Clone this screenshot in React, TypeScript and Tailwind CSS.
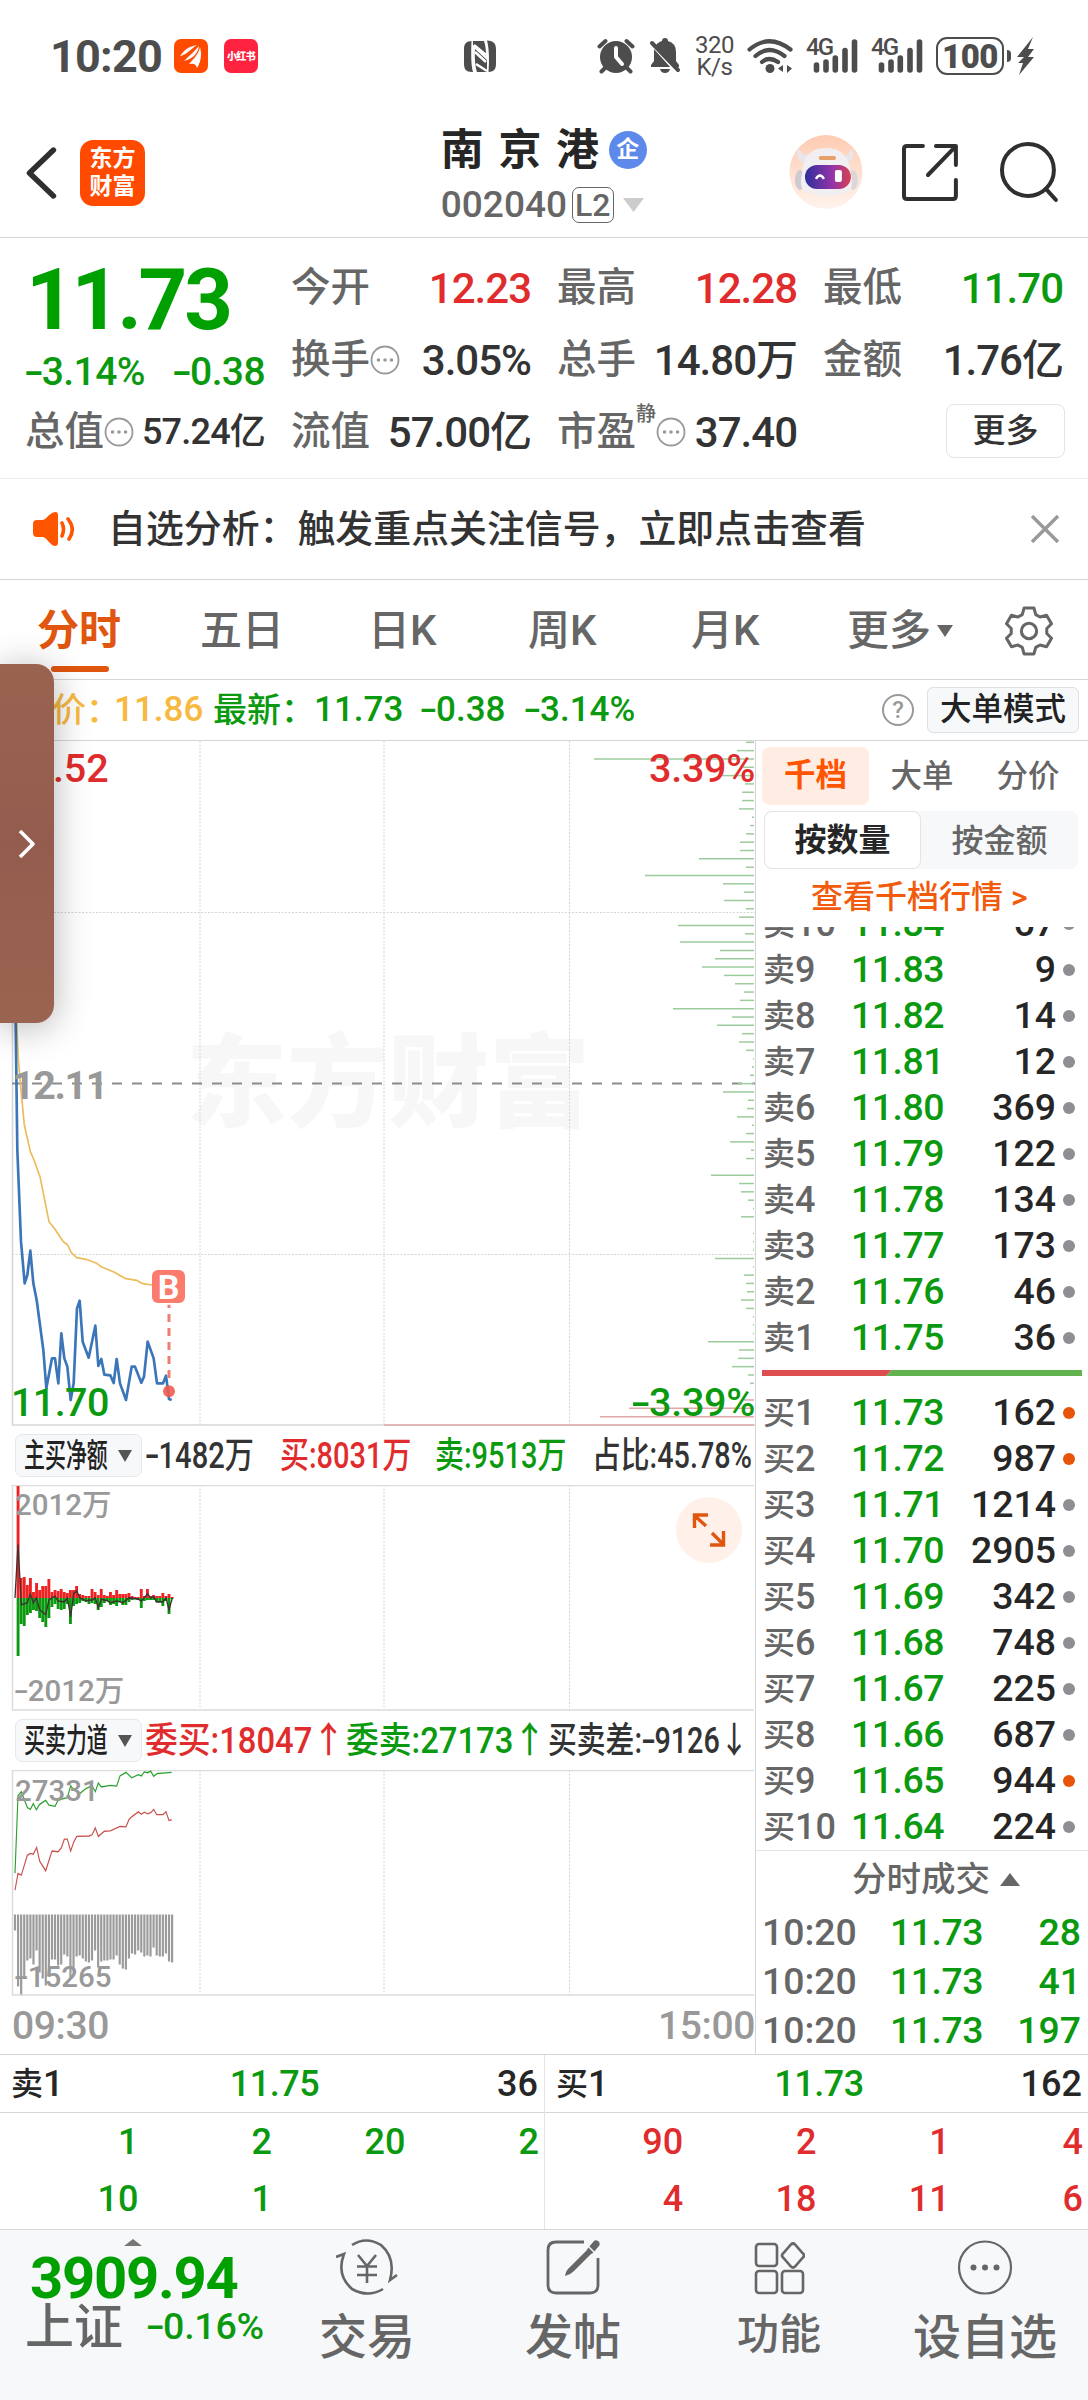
import { ReactNode } from 'react';

const asks = [
  ['卖10', '11.84', '67'],
  ['卖9', '11.83', '9'],
  ['卖8', '11.82', '14'],
  ['卖7', '11.81', '12'],
  ['卖6', '11.80', '369'],
  ['卖5', '11.79', '122'],
  ['卖4', '11.78', '134'],
  ['卖3', '11.77', '173'],
  ['卖2', '11.76', '46'],
  ['卖1', '11.75', '36'],
];

const bids = [
  ['买1', '11.73', '162', 'hot'],
  ['买2', '11.72', '987', 'hot'],
  ['买3', '11.71', '1214'],
  ['买4', '11.70', '2905'],
  ['买5', '11.69', '342'],
  ['买6', '11.68', '748'],
  ['买7', '11.67', '225'],
  ['买8', '11.66', '687'],
  ['买9', '11.65', '944', 'hot'],
  ['买10', '11.64', '224'],
];

// resting size per price level, top to bottom
const depth = [
  8, 17, 160, 11, 32, 9, 12, 12, 15, 2, 4, 8, 14, 14, 55, 8, 109, 31, 10, 30, 8, 15, 76, 9, 74, 34, 39, 52, 30, 19, 10, 14,
  81, 22, 37, 12, 15, 8, 1, 2, 4, 16, 31, 6, 7, 17, 2, 8, 24, 3, 8, 0, 43, 15, 13, 6, 1, 13, 0, 1, 1, 1, 39, 1, 10, 8, 7,
  13, 8, 1, 1, 1, 46, 15, 16, 22, 6, 4, 0, 10, 125, 154, 370,
];

const buyFlow = [
  0, 112, 20, 21, 13, 20, 6, 15, 8, 12, 12, 19, 6, 8, 7, 9, 6, 5, 8, 8, 12, 4, 3, 2, 2, 9, 6, 3, 9, 3, 2, 6, 3, 8, 4, 4, 4,
  5, 2, 1, 1, 9, 2, 9, 2, 3, 2, 2, 5, 2, 4, 1,
];
const sellFlow = [
  0, 58, 26, 28, 17, 15, 12, 13, 20, 24, 29, 20, 9, 6, 11, 12, 11, 6, 26, 8, 6, 5, 3, 4, 6, 5, 6, 12, 9, 5, 3, 7, 6, 8, 4,
  7, 7, 4, 2, 1, 2, 10, 3, 2, 2, 2, 4, 4, 8, 3, 16, 1,
];
const gap = [
  16, 72, 80, 63, 46, 44, 50, 36, 58, 64, 71, 59, 45, 45, 51, 50, 40, 42, 64, 53, 42, 41, 44, 47, 48, 46, 36, 53, 47, 46,
  46, 45, 45, 41, 50, 54, 55, 44, 39, 40, 36, 38, 42, 41, 42, 33, 41, 42, 42, 39, 47, 48,
];

/* digits with a wider minus sign in front */
function Num({ v, className = '' }: { v: string; className?: string }) {
  const neg = v.startsWith('-');
  return (
    <span className={`inline-block whitespace-nowrap ${className}`}>
      {neg && <span className="inline-block w-[0.43em] text-center scale-x-[1.5]">-</span>}
      {neg ? v.slice(1) : v}
    </span>
  );
}

function More() {
  return (
    <svg width="30" height="30" viewBox="0 0 30 30" className="shrink-0" fill="#999">
      <circle cx="15" cy="15" r="13.5" fill="none" stroke="#999" strokeWidth="1.8" />
      <circle cx="8.5" cy="15" r="1.8" />
      <circle cx="15" cy="15" r="1.8" />
      <circle cx="21.5" cy="15" r="1.8" />
    </svg>
  );
}

function Stat({ label, value, color = 'text-[#333]', more = false, sup = '', small = false }: {
  label: string; value: string; color?: string; more?: boolean; sup?: string; small?: boolean;
}) {
  return (
    <div className="flex items-center justify-between h-[72px] whitespace-nowrap">
      <span className="flex items-center text-[#666] text-[39.5px]">
        {label}
        {sup && <span className="text-[20px] self-start -mt-[3px]">{sup}</span>}
        {more && <More />}
      </span>
      <Num v={value} className={`${color} ${small ? 'text-[36px] tracking-[-0.8px]' : 'text-[42px] tracking-[-1px]'}`} />
    </div>
  );
}

function Signal() {
  return (
    <div className="relative w-[52px] h-[36px]">
      <span className="absolute left-0 -top-[3px] text-[24px] font-medium tracking-[-2px] leading-none">4G</span>
      <svg width="52" height="36" viewBox="0 0 52 36" className="block" stroke="#4d4d4d" strokeWidth="5.6" strokeLinecap="round">
        <path d="M10.5 27v5M20 24v8M29.300 20v12M39 12.500v19.500M48.500 4v28" />
      </svg>
    </div>
  );
}

function StatusBar() {
  return (
    <div className="flex items-center h-[112px] pl-[50px] pr-[48px] text-[#4d4d4d]">
      <span className="w-[124px] text-[45px] font-bold tracking-[-0.8px] pt-[2px]">10:20</span>
      <svg width="34" height="34" viewBox="0 0 34 34" className="mr-[16px]">
        <rect width="34" height="34" rx="7" fill="#ff4a00" />
        <path d="M6 17.500C10 10 17 7 23 6C18 9 15 14 6 17.500ZM10 22C16 16 21 12 25 7C24 14 19 20 10 22ZM15 25C20 20 25 14 26 8C28 16 27 22 23 29C22 25 20 24 15 25Z" fill="#fff" />
      </svg>
      <span className="w-[34px] h-[34px] rounded-[7px] bg-[#ff2340] text-white text-[10px] font-black flex items-center justify-center tracking-[-0.6px]">小红书</span>
      <svg width="32" height="33" viewBox="0 0 32 33" className="ml-[206px]">
        <path d="M8 1C2 1 0 4 0 9V24C0 29 2 32 8 32H9C7 25 7 14 7.500 1Z" fill="#4d4d4d" />
        <path d="M24 32C30 32 32 29 32 24V9C32 4 30 1 23 .5C25 8 25.500 19 24.500 32Z" fill="#4d4d4d" />
        <path d="M9 1H20C21.500 5 22 10 22 16L9 5ZM11 9L23 20V32H13C11 26 10.500 17 11 9Z" fill="#4d4d4d" />
        <path d="M11 12L22 22M10 5L22 15M12 24L23 31" stroke="#fff" strokeWidth="2.500" />
      </svg>
      <svg width="38" height="36" viewBox="0 0 38 36" className="ml-[101px]" fill="#4d4d4d">
        <circle cx="19" cy="19" r="16" />
        <path d="M2.500 8.500L8.500 3M35.500 8.500L29.500 3M8 30L4.500 33.500M30 30L33.500 33.500" stroke="#4d4d4d" strokeWidth="4" strokeLinecap="round" />
        <path d="M19 10V19L25 26" stroke="#fff" strokeWidth="4" strokeLinecap="round" strokeLinejoin="round" fill="none" />
      </svg>
      <svg width="32" height="36" viewBox="0 0 32 36" className="ml-[14px]" fill="#4d4d4d">
        <path d="M9 5Q11 3.500 13 3Q13 0 16 0T19 3Q27 5 27 14V23L30 27V29H2V27L5 23V13Q5 8 9 5Z" />
        <path d="M11 31H21Q20 35 16 35T11 31Z" />
        <path d="M0 3L28 34" stroke="#fff" strokeWidth="3.500" />
        <path d="M3 5L29 32" stroke="#4d4d4d" strokeWidth="4" strokeLinecap="round" />
      </svg>
      <div className="ml-[13px] w-[41px] text-[24px] leading-[22px] text-center tracking-[-0.5px]">320<br />K/s</div>
      <svg width="46" height="36" viewBox="0 0 46 36" className="ml-[12px]" fill="none" stroke="#4d4d4d" strokeWidth="4.200" strokeLinecap="round">
        <path d="M2.500 11.500Q22 -5 43.500 11.500M8.500 18Q22 6 37.500 18M15 24Q22 18 31 24" />
        <circle cx="23" cy="30.500" r="4.500" fill="#4d4d4d" stroke="none" />
        <path d="M36 27v7l-5-3.500zM40 27v8l5-4.500z" fill="#4d4d4d" stroke="none" />
      </svg>
      <div className="ml-[13px]"><Signal /></div>
      <div className="ml-[13px]"><Signal /></div>
      <div className="ml-[13px] w-[68px] h-[38px] border-[2.5px] border-[#4d4d4d] rounded-[11px] flex items-center justify-center text-[33px] font-black leading-none tracking-[-0.5px]">100</div>
      <div className="ml-[3px] w-[4px] h-[12px] rounded-r bg-[#4d4d4d]" />
      <svg width="18" height="38" viewBox="0 0 18 38" className="ml-[6px] shrink-0" fill="#4d4d4d">
        <path d="M16 0L0 20H7L1 26H6L2 38L17 20H11L17 12H11Z" />
      </svg>
    </div>
  );
}

function Header() {
  return (
    <header className="flex h-[126px] border-b border-[#d6d6d6] pl-[26px] pr-[28px]">
      <svg width="32" height="54" viewBox="0 0 32 54" className="mt-[34px]" fill="none" stroke="#2f2f2f" strokeWidth="5.500" strokeLinecap="round" strokeLinejoin="round">
        <path d="M27.500 4L3.500 27L27.500 50" />
      </svg>
      <div className="ml-[22px] mt-[28px] w-[65px] h-[66px] rounded-[13px] bg-[#ff4a00] text-white text-[23px] leading-[28px] font-bold text-center pt-[5px]">东方<br />财富</div>
      <div className="ml-[296px] w-[220px]">
        <div className="flex items-center h-[50px] mt-[13px]">
          <span className="text-[43px] text-[#262626] font-bold tracking-[14.6px] whitespace-nowrap">南京港</span>
          <span className="-ml-[5px] shrink-0 w-[38px] h-[38px] rounded-full bg-[#5d8aea] text-white text-[23px] font-bold flex items-center justify-center">企</span>
        </div>
        <div className="flex items-center h-[40px] mt-[10px] text-[#666]">
          <span className="text-[37px] font-medium w-[131px]">002040</span>
          <span className="w-[42px] h-[36px] rounded-[7px] border-[1.5px] border-[#666] text-[32px] font-medium leading-none flex items-center justify-center">L2</span>
          <svg width="21" height="14" viewBox="0 0 21 14" className="ml-[9px]"><path d="M0 0H21L10.500 14Z" fill="#ccc" /></svg>
        </div>
      </div>
      <svg width="74" height="76" viewBox="0 0 74 76" className="ml-[129px] mt-[22px]">
        <defs>
          <linearGradient id="halo" x1="0" y1="0" x2="0" y2="1"><stop offset="0" stopColor="#ffcbb2" /><stop offset="1" stopColor="#fff3ed" /></linearGradient>
          <linearGradient id="visor"><stop offset="0" stopColor="#2e2f9c" /><stop offset="0.6" stopColor="#9434a8" /><stop offset="1" stopColor="#d8404f" /></linearGradient>
        </defs>
        <ellipse cx="37" cy="38" rx="36.500" ry="37" fill="url(#halo)" />
        <path d="M8 18Q10 12 12 18Q15 22 20 20L15 30Q7 26 8 18ZM64 18Q62 12 60 19Q58 23 54 21L58 30Q66 26 64 18Z" fill="#e9e5e8" />
        <ellipse cx="11" cy="46" rx="5" ry="10" fill="#cfc9d0" />
        <ellipse cx="64" cy="46" rx="5" ry="10" fill="#dcd6db" />
        <path d="M13 40Q14 14 37 14T62 40Q66 58 56 59Q37 66 19 58Q9 56 13 40Z" fill="#f1eff2" />
        <rect x="30" y="22" width="17" height="4" rx="1.500" fill="#e8a06a" />
        <rect x="16" y="31" width="46" height="24" rx="12" fill="url(#visor)" />
        <path d="M27 45Q31 38 35 45" stroke="#fff" strokeWidth="2.500" fill="none" />
        <rect x="46" y="36" width="7" height="12" rx="2" fill="#fff" />
      </svg>
      <svg width="58" height="60" viewBox="0 0 58 60" className="ml-[38px] mt-[30px]" fill="none" stroke="#2f2f2f" strokeWidth="4" strokeLinecap="round" strokeLinejoin="round">
        <path d="M22 4H6Q3 4 3 7V54Q3 57 6 57H52Q55 57 55 54V38M35 4H55V23M55 4L27 33" />
      </svg>
      <svg width="60" height="62" viewBox="0 0 60 62" className="ml-[41px] mt-[29px]" fill="none" stroke="#2f2f2f" strokeWidth="4" strokeLinecap="round">
        <circle cx="28" cy="29" r="26" />
        <path d="M46 48L56 59" />
      </svg>
    </header>
  );
}

function Quote() {
  return (
    <section className="grid grid-cols-[240px_240px_240px_240px] gap-x-[26px] h-[241px] pt-[14px] pl-[25px] border-b border-[#ebebeb] font-medium">
      <div>
        <div className="h-[96px] text-[85px] leading-[97px] font-bold text-[#00a000] tracking-[-3.2px] pl-[1px]">11.73</div>
        <div className="flex justify-between h-[48px] items-center text-[39px] text-[#0b9a0f] tracking-[-0.6px]">
          <Num v="-3.14%" />
          <Num v="-0.38" />
        </div>
        <Stat label="总值" value="57.24亿" more small />
      </div>
      <div>
        <Stat label="今开" value="12.23" color="text-[#e02c2c]" />
        <Stat label="换手" value="3.05%" more />
        <Stat label="流值" value="57.00亿" />
      </div>
      <div>
        <Stat label="最高" value="12.28" color="text-[#e02c2c]" />
        <Stat label="总手" value="14.80万" />
        <Stat label="市盈" value="37.40" sup="静" more />
      </div>
      <div>
        <Stat label="最低" value="11.70" color="text-[#0b9a0f]" />
        <Stat label="金额" value="1.76亿" />
        <div className="flex items-center h-[70px]">
          <span className="ml-[123px] w-[119px] h-[54px] rounded-[8px] border-[1.5px] border-[#e4e4e4] text-[33px] text-[#333] flex items-center justify-center shrink-0">更多</span>
        </div>
      </div>
    </section>
  );
}

function Notice() {
  return (
    <div className="flex items-center h-[101px] border-b border-[#d6d6d6] pl-[32px]">
      <svg width="44" height="36" viewBox="0 0 44 36">
        <path d="M5 9H10Q13 9 16 5L20 2Q26 -1 26 4V31Q26 37 20 34L16 30Q13 26 10 26H5Q1 26 1 22V13Q1 9 5 9Z" fill="#ff5500" />
        <path d="M30 12Q33 18 30 25M36 8Q44 18 37 28" fill="none" stroke="#ff5500" strokeWidth="3.600" strokeLinecap="round" />
      </svg>
      <span className="ml-[32px] text-[37.9px] font-medium text-[#333] whitespace-nowrap w-[923px]">自选分析：触发重点关注信号，立即点击查看</span>
      <svg width="28" height="28" viewBox="0 0 28 28" stroke="#999" strokeWidth="3.400"><path d="M1 1L27 27M27 1L1 27" /></svg>
    </div>
  );
}

function Tabs() {
  return (
    <nav className="flex items-center h-[100px] pt-[2px] border-b border-[#d6d6d6] text-[42px] text-[#666] font-medium whitespace-nowrap">
      <span className="relative ml-[37px] w-[163px] text-[#e0560f] font-bold">
        分时
        <i className="absolute left-[14px] -bottom-[10px] w-[58px] h-[6px] rounded-full bg-[#e0560f]" />
      </span>
      <span className="w-[168px]">五日</span>
      <span className="w-[160px]">日K</span>
      <span className="w-[163px]">周K</span>
      <span className="w-[156px]">月K</span>
      <span className="w-[90px]">更多</span>
      <svg width="16" height="12" viewBox="0 0 16 12"><path d="M0 0H16L8 12Z" fill="#666" /></svg>
      <svg width="54" height="54" viewBox="0 0 24 24" className="ml-[49px]" fill="none" stroke="#666" strokeWidth="1.350" strokeLinejoin="round">
        <path d="M9.800 1.800h4.400l.8 2.900 1.900 1.100 2.900-.8 2.200 3.800-2.100 2.100v2.200l2.100 2.100-2.200 3.800-2.900-.8-1.900 1.100-.8 2.900H9.800L9 19.300l-1.900-1.100-2.900.8L2 15.200l2.100-2.100v-2.200L2 8.800 4.200 5l2.900.8L9 4.700z" />
        <circle cx="12" cy="12" r="3.400" />
      </svg>
    </nav>
  );
}

function InfoBar() {
  return (
    <div className="flex items-center h-[61px] border-b border-[#d6d6d6] text-[34px] font-medium whitespace-nowrap">
      <span className="w-[114px] pl-[18px] text-[#f7b940]">均价：</span>
      <span className="w-[99px] text-[#f7b940] text-[35px]">11.86</span>
      <span className="w-[101px] text-[#0b9a0f]">最新：</span>
      <span className="w-[107px] text-[#0b9a0f] text-[35px]">11.73</span>
      <Num v="-0.38" className="w-[104px] text-[#0b9a0f] text-[35px]" />
      <Num v="-3.14%" className="w-[357px] text-[#0b9a0f] text-[35px]" />
      <span className="w-[32px] h-[32px] shrink-0 rounded-full border-2 border-[#999] text-[#999] text-[24px] leading-none flex items-center justify-center">?</span>
      <span className="ml-[13px] shrink-0 w-[152px] h-[46px] rounded-[6px] border-[1.5px] border-[#dcdfe4] bg-[#f7f8fa] text-[31.5px] text-[#222] flex items-center justify-center">大单模式</span>
    </div>
  );
}

function MainChart() {
  return (
    <div className="relative h-[685px] text-[39.5px] font-medium leading-none">
      <div className="absolute left-[186px] top-[293px] text-[101px] font-black text-[#f7f7f7] whitespace-nowrap">东方财富</div>
      <svg width="755" height="685" viewBox="0 741 755 685" className="absolute left-0 top-0" fill="none">
        <path d="M200 741V1425M384 741V1425M569.500 741V1425M12 912.500H755M12 1254.500H755" stroke="#d4d4d4" strokeWidth="1" strokeDasharray="2 1.500" />
        <path d="M12.500 741V1425H755" stroke="#d6d6d6" strokeWidth="1.600" />
        <path d="M12 1083.500H755" stroke="#8c8c8c" strokeWidth="2" strokeDasharray="10 10" />
        {depth.map((w, i) => (
          <path key={i} d={`M${754 - w} ${742.3 + i * 8.325}H754`} stroke={i > 78 ? '#e0a8a8' : '#9ccb9c'} strokeWidth="1.500" />
        ))}
        <g transform="translate(0 1000) scale(.33333)" strokeLinejoin="round">
          <path d="M46 -200L50 69L55 180L62 260L73 375L91 455L102 480L120 530L147 665L165 688L190 725L203 735L214 758L230 773L258 778L290 790L305 801L340 815L375 835L410 841L425 850L455 855L480 862L515 873" stroke="#ecbb5a" strokeWidth="5" />
          <path d="M44 -200L47 69L52 450L63 725L74 850L82 825L91 752L100 850L110 900L130 1050L139 1165L156 1075L165 1075L175 1150L184 1000L193 1075L202 1100L212 1200L221 1150L231 925L239 902L248 1025L266 1073L286 977L295 1098L304 1077L313 1124L331 1126L341 1149L350 1077L360 1150L378 1200L395 1100L405 1100L424 1148L432 1130L443 1025L461 1075L471 1150L489 1150L498 1127L507 1197L515 1200" stroke="#3b76b8" strokeWidth="8" />
          <path d="M507 914V1150" stroke="#ee7e74" strokeWidth="9" strokeDasharray="24 18" strokeDashoffset="14" />
          <circle cx="507" cy="1174" r="18" fill="#ef5b50" fillOpacity=".9" />
        </g>
      </svg>
      <span className="absolute left-[152px] top-[529px] w-[33px] h-[33px] rounded-[6px] bg-[#fb7b6c] text-white text-[34px] font-bold flex items-center justify-center">B</span>
      <span className="absolute left-[8px] top-[8px] text-[#e02c2c]">12.52</span>
      <span className="absolute right-0 top-[8px] text-[#e02c2c] tracking-[-0.3px]">3.39%</span>
      <span className="absolute left-[12px] top-[325px] text-[#999] font-bold tracking-[-1.4px]">12.11</span>
      <span className="absolute left-[11px] top-[642px] text-[#0b9a0f] tracking-[-0.6px]">11.70</span>
      <Num v="-3.39%" className="absolute right-0 top-[642px] text-[#0b9a0f] tracking-[-0.3px]" />
    </div>
  );
}

function Picker({ children }: { children: ReactNode }) {
  return (
    <div className="ml-[15px] w-[127px] h-[43px] shrink-0 rounded-[7px] border-[1.5px] border-[#e6e8ec] bg-[#f7f8fa] flex items-center pl-[8px] text-[#222]">
      <span className="w-[95px] shrink-0 whitespace-nowrap text-[33px]"><span className="inline-block origin-left scale-x-[0.635] w-[132px]">{children}</span></span>
      <svg width="14" height="12" viewBox="0 0 14 12" className="-ml-px shrink-0"><path d="M0 0H14L7 12Z" fill="#555" /></svg>
    </div>
  );
}

function FlowChart() {
  return (
    <div className="relative h-[226px] text-[29.5px] text-[#999] font-medium leading-none">
      <svg width="755" height="226" viewBox="0 1485 755 226" className="absolute left-0 top-0" fill="none">
        <path d="M200 1485V1710M384 1485V1710M569.500 1485V1710" stroke="#d4d4d4" strokeDasharray="2 1.500" />
        <path d="M12.500 1485.500H754M12.500 1485V1710H754" stroke="#dcdcdc" strokeWidth="1.500" />
        {buyFlow.map((v, i) => (
          <path key={i} d={`M${15 + i * 3.08} 1598V${1598 - v}`} stroke="#ee2222" strokeWidth="2.900" />
        ))}
        {sellFlow.map((v, i) => (
          <path key={i} d={`M${15 + i * 3.08} 1598V${1598 + v}`} stroke="#0b9a0f" strokeWidth="2.900" />
        ))}
        <path
          transform="translate(0 1420) scale(.33333 .3954)"
          d="M45 450L54 315L64 467L82 462L91 440L100 462L109 450L119 480L137 492L147 455L165 445L174 458L193 460L202 450L212 497L221 440L230 432L239 450L258 457L276 455L286 450L295 475L304 453L322 457L331 462L350 458L369 462L387 450L415 453L424 458L443 440L452 450L461 447L470 460L489 460L498 450L507 480L517 450"
          stroke="#3a3330"
          strokeWidth="4"
        />
      </svg>
      <span className="absolute left-[15px] top-[6px] whitespace-nowrap">2012万</span>
      <Num v="-2012万" className="absolute left-[15px] top-[192px]" />
      <span className="absolute right-[13px] top-[12px] w-[66px] h-[66px] rounded-full bg-[#fff1ea] flex items-center justify-center">
        <svg width="34" height="34" viewBox="0 0 34 34" fill="none" stroke="#e0560f" strokeWidth="3.400">
          <path d="M16 2H2.500V15M3 3L14 13M18 32H31.500V18M31 31L20 20" />
        </svg>
      </span>
    </div>
  );
}

function ForceChart() {
  return (
    <div className="relative h-[226px] text-[29.5px] text-[#999] font-medium leading-none">
      <svg width="755" height="226" viewBox="0 1770 755 226" className="absolute left-0 top-0" fill="none">
        <path d="M200 1770V1995M384 1770V1995M569.500 1770V1995" stroke="#d4d4d4" strokeDasharray="2 1.500" />
        <path d="M12.500 1770.500H754M12.500 1770V1995H754" stroke="#dcdcdc" strokeWidth="1.500" />
        {gap.map((v, i) => (
          <path key={i} d={`M${15 + i * 3.08} 1914.500v${v}`} stroke="#9b9b9b" strokeWidth="2.200" />
        ))}
        <g transform="translate(0 1420) scale(.33333 .3954)" strokeWidth="3.400">
          <path d="M45 1146L54 950L64 940L75 965L82 980L91 985L100 970L109 986L119 972L137 962L147 974L165 977L174 962L193 957L202 955L212 925L221 935L239 945L258 932L276 925L286 940L295 918L304 928L331 924L350 926L360 900L378 891L395 905L415 897L424 900L433 890L443 892L452 888L461 901L472 894L489 893L515 891" stroke="#2aa02e" />
          <path d="M45 1189L54 1147L64 1151L82 1101L91 1096L100 1098L110 1081L119 1116L137 1140L156 1090L174 1092L184 1082L193 1060L202 1060L212 1090L221 1068L230 1053L267 1052L276 1049L286 1032L295 1053L313 1040L331 1039L360 1028L378 1029L387 1010L396 1003L415 991L424 997L433 992L443 996L452 993L461 985L470 998L489 998L498 991L507 1013L515 1011" stroke="#c9524e" />
        </g>
      </svg>
      <span className="absolute left-[15px] top-[7px]">27331</span>
      <Num v="-15265" className="absolute left-[15px] top-[193px]" />
    </div>
  );
}

function Level({ row }: { row: string[] }) {
  return (
    <div className="flex items-center h-[46px] shrink-0 text-[37.4px] leading-none font-medium whitespace-nowrap">
      <span className="w-[87px] text-[#666] flex items-center"><span className="text-[32px]">{row[0][0]}</span><span className="text-[36px]">{row[0].slice(1)}</span></span>
      <span className="w-[100px] text-[#0b9a0f] pl-px tracking-[-0.5px]">{row[1]}</span>
      <span className="w-[106px] text-right text-[#262626]">{row[2]}</span>
      <i className={`ml-[7px] w-[12px] h-[12px] rounded-full ${row[3] ? 'bg-[#e65508]' : 'bg-[#8e8e93]'}`} />
    </div>
  );
}

function OrderBook() {
  return (
    <aside className="w-[333px] border-l-[1.5px] border-[#d6d6d6]">
      <div className="flex items-center pt-[6px] pl-[6px] text-[31.5px] font-medium text-[#666] text-center">
        <span className="w-[107px] h-[58px] leading-[57px] rounded-[8px] bg-[#ffece3] text-[#ff5500] font-bold">千档</span>
        <span className="w-[106px] pt-px">大单</span>
        <span className="w-[106px] pt-px">分价</span>
      </div>
      <div className="flex items-center mt-[6px] ml-[8px] w-[314px] h-[58px] rounded-[8px] bg-[#f7f8fa] text-[32px] font-medium text-[#666] text-center">
        <span className="w-[157px] h-[58px] leading-[56px] rounded-[8px] bg-white border-[1.5px] border-[#e4e4e4] text-[#262626] font-bold">按数量</span>
        <span className="w-[157px] pt-px">按金额</span>
      </div>
      <div className="h-[58px] leading-[57px] pl-[55px] text-[32px] font-medium text-[#f25a0c] whitespace-nowrap">查看千档行情 &gt;</div>
      <div className="h-[434px] pl-[7px] overflow-hidden flex flex-col justify-end">
        {asks.map((r) => <Level key={r[0]} row={r} />)}
      </div>
      <svg width="320" height="6" viewBox="0 0 320 6" className="ml-[6px] mt-[9px]">
        <path d="M0 0H130L124 6H0Z" fill="#dc4e50" />
        <path d="M130 0H320V6H124Z" fill="#61b44d" />
      </svg>
      <div className="pl-[7px] pt-[14px] h-[475px] border-b border-[#e4e4e4]">
        {bids.map((r) => <Level key={r[0]} row={r} />)}
      </div>
      <div className="flex items-center h-[57px] pl-[96px] text-[34.5px] text-[#666] font-medium">
        分时成交
        <svg width="20" height="13" viewBox="0 0 20 13" className="ml-[10px]"><path d="M0 13H20L10 0Z" fill="#666" /></svg>
      </div>
      {['28', '41', '197'].map((v) => (
        <div key={v} className="flex items-center h-[49px] pl-[6px] text-[37.4px] font-medium text-[#0b9a0f] leading-none">
          <span className="w-[128px] text-[#666]">10:20</span>
          <span className="w-[98px] tracking-[-0.5px]">11.73</span>
          <span className="w-[93px] text-right">{v}</span>
        </div>
      ))}
    </aside>
  );
}

function Queue({ side, price, qty, rows, color }: { side: string; price: string; qty: string; rows: string[]; color: string }) {
  return (
    <div className="w-[544px] text-[36px] font-medium leading-none border-l border-[#e4e4e4] first:border-l-0">
      <div className="flex items-center justify-between h-[58px] pl-[11px] pr-[6px] border-b border-[#d6d6d6] text-[#262626]">
        <span className="flex items-center w-[80px]"><span className="text-[32px]">{side[0]}</span>{side[1]}</span>
        <span className="text-[#0b9a0f] tracking-[-0.5px]">{price}</span>
        <span className="w-[80px] text-right">{qty}</span>
      </div>
      <div className={`grid grid-cols-4 h-[116px] pl-[5px] pr-[5px] pb-px text-right items-center ${color}`}>
        {rows.map((v, i) => <span key={i}>{v}</span>)}
      </div>
    </div>
  );
}

function FooterItem({ label, className, children }: { label: string; className: string; children: ReactNode }) {
  return (
    <div className={`flex flex-col items-center pt-[8px] ${className}`}>
      {children}
      <span className="mt-[13px] whitespace-nowrap leading-[58px]">{label}</span>
    </div>
  );
}

function Footer() {
  return (
    <footer className="flex h-[171px] bg-[#f7f8fa] border-t border-[#d6d6d6] text-[48px] text-[#666] font-medium">
      <div className="w-[264px] pl-[25px] pt-[9px]">
        <svg width="18" height="7" viewBox="0 0 18 7" className="block ml-[99px]"><path d="M0 7H18L9 0Z" fill="#777" /></svg>
        <div className="h-[52px] leading-[64px] pl-[5px] text-[58px] font-bold text-[#00a000] tracking-[-1.3px]">3909.94</div>
        <div className="flex items-center h-[58px] whitespace-nowrap leading-none">
          <span className="w-[123px] text-[49px]">上证</span>
          <Num v="-0.16%" className="text-[37.5px] text-[#0b9a0f] tracking-[-0.2px]" />
        </div>
      </div>
      <FooterItem label="交易" className="w-[206px]">
        <svg width="62" height="58" viewBox="0 0 62 58" fill="none" stroke="#666" strokeWidth="2.600">
          <path d="M16 7Q30 -2 45 7Q60 20 54 42L61 37M47 51Q32 60 16 51Q0 37 8 16L0 19" />
          <path d="M22 17L31 28L40 17M31 28V45M21 28.500H41M21 37H41" />
        </svg>
      </FooterItem>
      <FooterItem label="发帖" className="w-[206px]">
        <svg width="54" height="58" viewBox="0 0 54 58" fill="none" stroke="#666" strokeWidth="2.800">
          <path d="M38 4H10Q2 4 2 12V47Q2 55 10 55H44Q52 55 52 47V20" />
          <path d="M19 38Q20 32 24 29L42 11L46 15L28 33Q24 37 19 38Z" fill="#666" stroke="none" />
          <path d="M45 12L50 6" strokeWidth="7" strokeLinecap="round" stroke="#666" />
          <path d="M42 8L49 15" strokeWidth="1.500" stroke="#f7f8fa" />
        </svg>
      </FooterItem>
      <FooterItem label="功能" className="w-[206px] text-[42px] [&>span]:leading-[52px]">
        <svg width="52" height="58" viewBox="0 0 52 58" fill="none" stroke="#666" strokeWidth="2.600">
          <rect x="3" y="6" width="21" height="22" rx="3" />
          <rect x="3" y="33" width="21" height="22" rx="3" />
          <rect x="29" y="33" width="21" height="22" rx="3" />
          <path d="M38 6.500Q40 4.500 42 6.500L50 15.500Q52 17.500 50 19.500L42 28.500Q40 30.500 38 28.500L30 19.500Q28 17.500 30 15.500Z" />
        </svg>
      </FooterItem>
      <FooterItem label="设自选" className="w-[206px]">
        <svg width="56" height="58" viewBox="0 0 56 58" fill="#666">
          <circle cx="28" cy="29.500" r="26" fill="none" stroke="#666" strokeWidth="2.200" />
          <circle cx="16.500" cy="29.500" r="3" />
          <circle cx="28" cy="29.500" r="3" />
          <circle cx="39.500" cy="29.500" r="3" />
        </svg>
      </FooterItem>
    </footer>
  );
}

export default function App() {
  return (
    <div className="relative w-[1088px] h-[2400px] bg-white overflow-hidden" style={{ fontFamily: "Roboto, 'Noto Sans CJK SC', sans-serif" }}>
      <StatusBar />
      <Header />
      <Quote />
      <Notice />
      <Tabs />
      <InfoBar />
      <div className="flex h-[1313px]">
        <div className="w-[755px]">
          <MainChart />
          <div className="flex items-center h-[59px] text-[36px] font-medium whitespace-nowrap text-[#333]">
            <Picker>主买净额</Picker>
            <span className="ml-[4px] w-[134px]"><Num v="-1482万" className="origin-left scale-x-[0.81]" /></span>
            <span className="w-[155px] text-[#e02c2c]"><span className="inline-block origin-left scale-x-[0.805]">买:8031万</span></span>
            <span className="w-[157px] text-[#0b9a0f]"><span className="inline-block origin-left scale-x-[0.805]">卖:9513万</span></span>
            <span className="w-[160px]"><span className="inline-block origin-left scale-x-[0.8]">占比:45.78%</span></span>
          </div>
          <FlowChart />
          <div className="flex items-center h-[59px] text-[36px] font-medium whitespace-nowrap text-[#333]">
            <Picker>买卖力道</Picker>
            <span className="ml-[3px] w-[201px] text-[#e02c2c]"><span className="inline-block origin-left scale-x-[0.91]">委买:18047↑</span></span>
            <span className="w-[202px] text-[#0b9a0f]"><span className="inline-block origin-left scale-x-[0.91]">委卖:27173↑</span></span>
            <span className="w-[200px]"><span className="inline-block origin-left scale-x-[0.8]">买卖差:<Num v="-9126↓" /></span></span>
          </div>
          <ForceChart />
          <div className="flex justify-between items-center h-[60px] pl-[12px] text-[39px] text-[#999] font-medium tracking-[-0.4px]">
            <span>09:30</span>
            <span>15:00</span>
          </div>
        </div>
        <OrderBook />
      </div>
      <div className="flex h-[175px] border-t border-[#d6d6d6]">
        <Queue side="卖1" price="11.75" qty="36" rows={['1', '2', '20', '2', '10', '1', '', '']} color="text-[#0b9a0f]" />
        <Queue side="买1" price="11.73" qty="162" rows={['90', '2', '1', '4', '4', '18', '11', '6']} color="text-[#e02c2c]" />
      </div>
      <Footer />

      {/* side drawer handle */}
      <div className="absolute left-0 top-[664px] w-[54px] h-[359px] rounded-r-[18px] bg-gradient-to-b from-[#9a6350] via-[#945c4e] to-[#9b6450] shadow-[0_4px_36px_rgba(0,0,0,0.3)] flex items-center justify-center">
        <svg width="18" height="30" viewBox="0 0 18 30" fill="none" stroke="#fff" strokeWidth="3.600" strokeLinejoin="round"><path d="M2 2L15 15L2 28" /></svg>
      </div>
    </div>
  );
}
